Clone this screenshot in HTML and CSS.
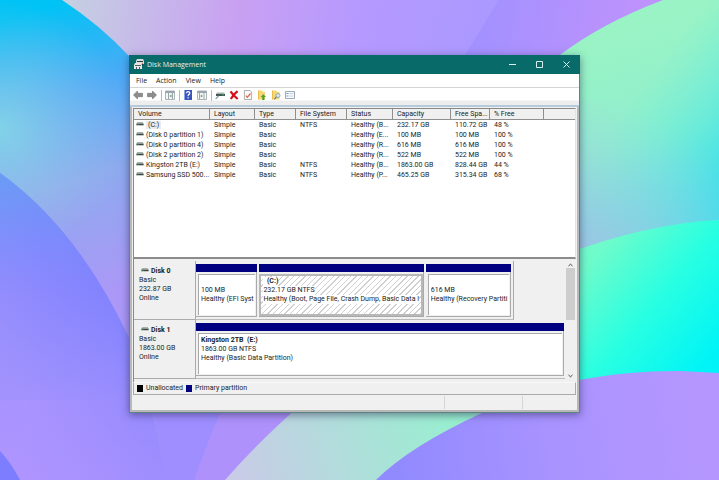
FILE: index.html
```
<!DOCTYPE html>
<html lang="en">
<head>
<meta charset="utf-8">
<title>Disk Management</title>
<link rel="stylesheet" href="styles.css">
</head>
<body>
<svg class="wallpaper" viewBox="0 0 719 480" preserveAspectRatio="none" aria-hidden="true">
  <defs>
    <linearGradient id="top" gradientUnits="userSpaceOnUse" x1="70" y1="0" x2="480" y2="60"><stop offset="0" stop-color="#c5cfe2"/><stop offset=".4" stop-color="#c9a1f2"/><stop offset=".7" stop-color="#b599ff"/><stop offset="1" stop-color="#ab99ff"/></linearGradient>
    <linearGradient id="fold" gradientUnits="userSpaceOnUse" x1="480" y1="0" x2="630" y2="30"><stop offset="0" stop-color="#a291ff"/><stop offset="1" stop-color="#bd92fc"/></linearGradient>
    <linearGradient id="left" gradientUnits="userSpaceOnUse" x1="35" y1="10" x2="115" y2="290"><stop offset="0" stop-color="#00c3f5"/><stop offset=".3" stop-color="#4eaaf6"/><stop offset=".6" stop-color="#8da9ee"/><stop offset="1" stop-color="#ab98f7"/></linearGradient>
    <radialGradient id="leftlight" gradientUnits="userSpaceOnUse" cx="0" cy="130" r="130"><stop offset="0" stop-color="#8ee0e4" stop-opacity=".75"/><stop offset="1" stop-color="#a5c8e8" stop-opacity="0"/></radialGradient>
    <linearGradient id="lower" gradientUnits="userSpaceOnUse" x1="110" y1="260" x2="-10" y2="350"><stop offset="0" stop-color="#7b7dff"/><stop offset="1" stop-color="#a896fb"/></linearGradient>
    <linearGradient id="lowfade" gradientUnits="userSpaceOnUse" x1="0" y1="175" x2="40" y2="480"><stop offset="0" stop-color="#699cf5"/><stop offset=".4" stop-color="#8388ff" stop-opacity=".3"/><stop offset="1" stop-color="#b294ff" stop-opacity=".75"/></linearGradient>
    <linearGradient id="mint" gradientUnits="userSpaceOnUse" x1="610" y1="40" x2="680" y2="250"><stop offset="0" stop-color="#99f3c5"/><stop offset=".5" stop-color="#8feece"/><stop offset="1" stop-color="#7cd1e8"/></linearGradient>
    <linearGradient id="mintfade" gradientUnits="userSpaceOnUse" x1="630" y1="100" x2="745" y2="190"><stop offset="0" stop-color="#60f0dd" stop-opacity="0"/><stop offset="1" stop-color="#24dff0"/></linearGradient>
    <linearGradient id="mintgrey" gradientUnits="userSpaceOnUse" x1="660" y1="120" x2="585" y2="255"><stop offset="0" stop-color="#9dd8df" stop-opacity="0"/><stop offset="1" stop-color="#9cc4e4"/></linearGradient>
    <linearGradient id="aqua" gradientUnits="userSpaceOnUse" x1="585" y1="265" x2="705" y2="365"><stop offset="0" stop-color="#70fbca"/><stop offset=".5" stop-color="#28ffe2"/><stop offset="1" stop-color="#00f4f7"/></linearGradient>
    <linearGradient id="ribbon" gradientUnits="userSpaceOnUse" x1="235" y1="480" x2="450" y2="410"><stop offset="0" stop-color="#c9cbe7"/><stop offset="1" stop-color="#98efcf"/></linearGradient>
    <linearGradient id="violet" gradientUnits="userSpaceOnUse" x1="400" y1="480" x2="700" y2="430"><stop offset="0" stop-color="#918aff"/><stop offset=".5" stop-color="#a893ff"/><stop offset="1" stop-color="#b596ff"/></linearGradient>
    <linearGradient id="bottom" gradientUnits="userSpaceOnUse" x1="20" y1="440" x2="160" y2="460"><stop offset="0" stop-color="#b095ff"/><stop offset="1" stop-color="#9089ff"/></linearGradient>
  </defs>
  <path fill="url(#top)" d="M0 0H719V480H0Z"/>
  <path fill="url(#fold)" d="M499 0Q474 40 450 80H719V0Z"/>
  <path fill="url(#left)" d="M62 0Q100 25 129 56L260 230V480H0V0Z"/>
  <path fill="url(#leftlight)" d="M0 0H62Q100 25 129 56V300H0Z"/>
  <path fill="url(#lower)" d="M0 173Q78 229 129 338Q151 400 166 480H0Z"/>
  <path fill="url(#lowfade)" d="M0 173Q78 229 129 338Q151 400 166 480H0Z"/>
  <path fill="url(#bottom)" opacity=".5" d="M0 400H156L166 480H0Z"/>
  <path fill="#7d7eff" d="M0 451Q12 464 20 480H0Z"/>
  <path fill="#9e8eff" d="M150 390H230L195 480H166Q160 430 150 390Z"/>
  <path fill="#ae91fb" d="M226 400H310L235 480H194Q207 442 226 400Z"/>
  <path fill="url(#mint)" d="M719 0H663Q602 23 560 55V270H719Z"/>
  <path fill="url(#mintfade)" d="M719 0H663Q602 23 560 55V270H719Z"/>
  <path fill="url(#mintgrey)" d="M560 100H719V270H560Z"/>
  <path fill="url(#aqua)" d="M719 220Q648 223 560 256V420H719Z"/>
  <path fill="url(#ribbon)" d="M225 480Q258 442 306 400H510L370 490Z"/>
  <path fill="url(#violet)" d="M376 480Q410 446 484 412Q570 370 680 371L719 373V480Z"/>
</svg>
<svg class="sprites" aria-hidden="true">
  <symbol id="drive" viewBox="0 0 9 5"><path fill="#a9b1ae" d="M1 0H8L9 2H0Z"/><path fill="#3d4543" d="M0 2H9V4H0Z"/><path fill="#46a66c" d="M1 2H3V3H1Z"/><path fill="#c2c6c5" d="M0 4H9V5H0Z"/></symbol>
</svg>
<main class="window">
  <header class="titlebar">
    <svg class="app-icon" viewBox="0 0 10 11"><path fill="#d8dddc" d="M3 0H9L10 2V5H2V2Z"/><path fill="#28383a" d="M3 2H9V3H3ZM2 5H9V6H2Z"/><path fill="#e6e8e8" d="M1 4H7L8 6V10H0V6Z"/><path fill="#555f60" d="M1 6H7V7H1ZM2 8H3V10H2ZM5 8H6V10H5Z"/><path fill="#d46b58" d="M8 4H9V5H8Z"/></svg>
    <h1>Disk Management</h1>
    <button type="button" aria-label="Minimize"><svg viewBox="0 0 7 7"><path d="M0 3.5H7"/></svg></button>
    <button type="button" aria-label="Maximize"><svg viewBox="0 0 7 7"><path d="M.5 .5H6.5V6.5H.5Z"/></svg></button>
    <button type="button" aria-label="Close"><svg viewBox="0 0 7 7"><path d="M.5 .5L6.5 6.5M6.5 .5L.5 6.5"/></svg></button>
  </header>
  <nav class="menu">
    <button type="button">File</button><button type="button">Action</button><button type="button">View</button><button type="button">Help</button>
  </nav>
  <div class="toolbar">
    <button type="button" aria-label="Back"><svg viewBox="0 0 10 10"><path fill="#8d8d8d" stroke="#6e6e6e" stroke-width=".6" d="M.5 5L4.5 1V3.3H9.5V6.7H4.5V9Z"/></svg></button>
    <button type="button" aria-label="Forward"><svg viewBox="0 0 10 10"><path fill="#8d8d8d" stroke="#6e6e6e" stroke-width=".6" d="M9.5 5L5.5 1V3.3H.5V6.7H5.5V9Z"/></svg></button>
    <span class="divider"></span>
    <button type="button" aria-label="Show console tree"><svg viewBox="0 0 10 10"><path fill="#f5f6f6" stroke="#9aa1a6" stroke-width=".8" d="M.5 1H9.5V9.5H.5Z"/><path fill="#9aa5ad" d="M.5 1H9.5V3H.5ZM3 3H4V9H3ZM7 3H8V9H7Z"/><path fill="#58a15c" d="M6.5 4.5V7.5L4.5 6Z"/></svg></button>
    <span class="divider"></span>
    <button type="button" aria-label="Help topics"><svg viewBox="0 0 10 10"><path fill="#3854bd" d="M1 0H9V10H1Z"/><path fill="#8da5e8" d="M1 0H2V10H1Z"/><path fill="none" stroke="#fff" stroke-width="1.2" d="M3.5 3.2Q3.6 1.7 5.1 1.7Q6.8 1.7 6.8 3.1Q6.8 4 5.7 4.6Q5.1 5 5.1 6.2M5.1 7.2V8.5"/></svg></button>
    <button type="button" aria-label="Show action pane"><svg viewBox="0 0 10 10"><path fill="#f5f6f6" stroke="#9aa1a6" stroke-width=".8" d="M.5 1H9.5V9.5H.5Z"/><path fill="#9aa5ad" d="M.5 1H9.5V3H.5ZM2 3H3V9H2ZM6.5 3H7.5V9H6.5Z"/><path fill="#58a15c" d="M3.8 4.5V7.5L5.8 6Z"/></svg></button>
    <span class="divider"></span>
    <button type="button" aria-label="Rescan disks"><svg viewBox="0 0 10 10"><path fill="#a4b5b2" d="M2 2.5H9L10 4H1Z"/><path fill="#455755" d="M1 4H10V6H1Z"/><path fill="#48a65e" d="M7 4.3H9V5.3H7Z"/><path stroke="#7799a5" stroke-width="1.2" d="M.7 8.8L3.5 6"/></svg></button>
    <button type="button" aria-label="Delete"><svg viewBox="0 0 10 10"><path fill="none" stroke="#d4101a" stroke-width="2.2" d="M1.5 1.3Q4 5 8.7 9M8.5 1.2Q5 4 1.8 9"/></svg></button>
    <button type="button" aria-label="Properties"><svg viewBox="0 0 10 10"><path fill="#fafafa" stroke="#9a9a9a" stroke-width=".8" d="M1.4 .5H7L8.6 2V9.5H1.4Z"/><path fill="none" stroke="#e16248" stroke-width="1.2" d="M3 5.6L4.3 7.3L7.5 3.5"/></svg></button>
    <button type="button" aria-label="Up one level"><svg viewBox="0 0 10 10"><path fill="#f5d777" d="M1 .5H5L6 1.7H8V9.5H1Z"/><path fill="#e9bd4e" d="M1 .5H2V9.5H1Z"/><path fill="#4aa62b" d="M6.3 4.3L9 7H7.4V10H5.2V7H3.7Z"/></svg></button>
    <button type="button" aria-label="Find"><svg viewBox="0 0 10 10"><path fill="#f5d777" d="M1 .5H5L6 1.7H8.5V9.5H1Z"/><path fill="#e9bd4e" d="M1 .5H2V9.5H1Z"/><circle cx="7" cy="5.5" r="2" fill="#d8eaf2" stroke="#7f9aa5" stroke-width=".8"/><path stroke="#718087" stroke-width="1.2" d="M5.4 7L3.2 9.3"/></svg></button>
    <button type="button" aria-label="View options"><svg viewBox="0 0 10 10"><path fill="#fafcff" stroke="#8296a5" stroke-width=".8" d="M.5 1.5H9.5V8.5H.5Z"/><path stroke="#6799ca" d="M1.5 3.5H3.5M1.5 6H3.5"/><path stroke="#afbac1" stroke-width=".7" d="M4.5 3.5H8.5M4.5 6H8.5"/></svg></button>
  </div>
  <div class="content">
    <section class="volumes">
      <table>
        <colgroup><col class="c-volume"><col class="c-layout"><col class="c-type"><col class="c-fs"><col class="c-status"><col class="c-capacity"><col class="c-free"><col class="c-percent"><col></colgroup>
        <thead><tr><th>Volume</th><th>Layout</th><th>Type</th><th>File System</th><th>Status</th><th>Capacity</th><th>Free Spa...</th><th>% Free</th><th></th></tr></thead>
        <tbody>
          <tr><td><svg class="drive"><use href="#drive"/></svg><span class="selected">(C:)</span></td><td>Simple</td><td>Basic</td><td>NTFS</td><td>Healthy (B...</td><td>232.17 GB</td><td>110.72 GB</td><td>48 %</td><td></td></tr>
          <tr><td><svg class="drive"><use href="#drive"/></svg>(Disk 0 partition 1)</td><td>Simple</td><td>Basic</td><td></td><td>Healthy (E...</td><td>100 MB</td><td>100 MB</td><td>100 %</td><td></td></tr>
          <tr><td><svg class="drive"><use href="#drive"/></svg>(Disk 0 partition 4)</td><td>Simple</td><td>Basic</td><td></td><td>Healthy (R...</td><td>616 MB</td><td>616 MB</td><td>100 %</td><td></td></tr>
          <tr><td><svg class="drive"><use href="#drive"/></svg>(Disk 2 partition 2)</td><td>Simple</td><td>Basic</td><td></td><td>Healthy (R...</td><td>522 MB</td><td>522 MB</td><td>100 %</td><td></td></tr>
          <tr><td><svg class="drive"><use href="#drive"/></svg>Kingston 2TB (E:)</td><td>Simple</td><td>Basic</td><td>NTFS</td><td>Healthy (B...</td><td>1863.00 GB</td><td>828.44 GB</td><td>44 %</td><td></td></tr>
          <tr><td><svg class="drive"><use href="#drive"/></svg>Samsung SSD 500...</td><td>Simple</td><td>Basic</td><td>NTFS</td><td>Healthy (P...</td><td>465.25 GB</td><td>315.34 GB</td><td>68 %</td><td></td></tr>
        </tbody>
      </table>
    </section>
    <section class="disks">
      <div class="disk-list">
        <article class="disk">
          <div class="disk-info"><h2><svg class="drive"><use href="#drive"/></svg>Disk 0</h2><p>Basic</p><p>232.87 GB</p><p>Online</p></div>
          <div class="partitions system">
            <div class="partition efi"><div class="partition-body"><b></b><p>100 MB</p><p>Healthy (EFI Syst</p></div></div>
            <div class="partition boot"><div class="partition-body hatched"><b>&nbsp; (C:)</b><p>232.17 GB NTFS</p><p>Healthy (Boot, Page File, Crash Dump, Basic Data I</p></div></div>
            <div class="partition recovery"><div class="partition-body"><b></b><p>616 MB</p><p>Healthy (Recovery Partiti</p></div></div>
          </div>
        </article>
        <article class="disk">
          <div class="disk-info"><h2><svg class="drive"><use href="#drive"/></svg>Disk 1</h2><p>Basic</p><p>1863.00 GB</p><p>Online</p></div>
          <div class="partitions">
            <div class="partition whole"><div class="partition-body"><b>Kingston 2TB&nbsp; (E:)</b><p>1863.00 GB NTFS</p><p>Healthy (Basic Data Partition)</p></div></div>
          </div>
        </article>
      </div>
      <div class="scrollbar">
        <button type="button" aria-label="Scroll up"><svg viewBox="0 0 5 3"><path d="M.5 2.5L2.5 .7L4.5 2.5"/></svg></button>
        <span class="thumb"></span>
        <button type="button" aria-label="Scroll down"><svg viewBox="0 0 5 3"><path d="M.5 .5L2.5 2.3L4.5 .5"/></svg></button>
      </div>
    </section>
    <div class="legend"><span class="swatch black"></span>Unallocated<span class="swatch navy"></span>Primary partition</div>
  </div>
  <footer class="statusbar"><span></span><span></span><span></span></footer>
</main>
</body>
</html>
```
FILE: styles.css
```
* { box-sizing: border-box; }

body {
  margin: 0;
  min-height: 100vh;
  padding: 55px 139px 67px 129px;
  display: flex;
  background: #a893ff;
  color: #1c1c1c;
  font: 7px/9px Roboto, "Open Sans", sans-serif;
}

h1, h2, p { margin: 0; font-size: inherit; font-weight: 400; }

button {
  padding: 0;
  border: 0;
  background: none;
  color: inherit;
  font: inherit;
}

svg { display: block; }

.wallpaper {
  position: absolute;
  inset: 0;
  z-index: -1;
  width: 100%;
  height: 100%;
}

.sprites { position: absolute; width: 0; height: 0; }

.window {
  flex: 1;
  min-width: 0;
  display: flex;
  flex-direction: column;
  border: 1px solid #5d8481;
  border-top: 0;
  background: #f0f0f0;
  box-shadow: 0 2px 8px rgba(30, 30, 70, .5);
}

.titlebar {
  height: 19px;
  margin: 0 -1px;
  padding-left: 5px;
  display: flex;
  align-items: center;
  background: #086a69;
  color: #e4f1f0;
}

.titlebar h1 { flex: 1; font-family: "Open Sans", sans-serif; }
.app-icon { width: 10px; height: 11px; margin-right: 3px; }

.titlebar button {
  width: 27px;
  height: 19px;
  display: grid;
  place-items: center;
}

.titlebar button svg {
  width: 7px;
  height: 7px;
  fill: none;
  stroke: #d5f0ee;
  stroke-width: 1;
}

.menu {
  height: 14px;
  padding-left: 6px;
  display: flex;
  gap: 9px;
  align-items: center;
  border-bottom: 1px solid #d5d5d5;
  background: #fff;
  font-family: "Open Sans", sans-serif;
}

.toolbar {
  height: 17px;
  padding: 2px 3px 5px;
  display: flex;
  gap: 4px;
  align-items: center;
  background: linear-gradient(#fff 12px, #ededed 13px);
}

.toolbar svg { width: 10px; height: 10px; }
.divider { width: 1px; height: 11px; margin-right: -1px; background: #b8b8b8; }

.content {
  flex: 1;
  display: flex;
  flex-direction: column;
  padding: 1px 3px 0;
  border-top: 2px solid #b5cbdc;
  background: #f0f0f0;
  box-shadow: inset 2px 0 #b8b8b8, inset -2px 0 #b8b8b8;
}

.volumes {
  flex: 1;
  border: 1px solid #888;
  border-right-color: #e3e3e3;
  border-bottom: 2px solid #8c8c8c;
  background: #fff;
}

table { width: 100%; border-collapse: separate; border-spacing: 0; table-layout: fixed; }

.c-volume { width: 76px; }
.c-layout { width: 45px; }
.c-type { width: 41px; }
.c-fs { width: 51px; }
.c-status { width: 46px; }
.c-capacity { width: 58px; }
.c-free { width: 39px; }
.c-percent { width: 54px; }

th, td {
  height: 10px;
  padding: 0 0 0 4px;
  overflow: hidden;
  font-weight: 400;
  text-align: left;
  white-space: nowrap;
}

th {
  height: 11px;
  border-right: 1px solid #8f8f8f;
  border-bottom: 1px solid #8f8f8f;
  background: #f0f0f0;
}

th:last-child { border-right: 0; }
td:first-child { padding-left: 2px; }

.drive {
  display: inline-block;
  width: 8px;
  height: 4px;
  margin-right: 2px;
  vertical-align: 1px;
}

.selected { padding: 0 2px; background: #ebebeb; }

.disks { display: flex; height: 123px; border-left: 1px solid #888; }
.disk-list { flex: 1; min-width: 0; padding-top: 2px; }
.disk { display: flex; height: 59px; }

.disk-info {
  width: 62px;
  padding: 6px 0 0 5px;
  border-right: 1px solid #aaa;
  border-bottom: 1px solid #aaa;
}

.disk-info h2, .partition b { font-weight: 700; }
.disk-info h2 { padding-left: 2px; }

.partitions {
  flex: 1;
  min-width: 0;
  display: flex;
  gap: 2px;
  padding: 3px 1px 2px 0;
  border-bottom: 1px solid #bbb;
}

.partitions.system {
  flex: 0 1 318px;
  padding-right: 2px;
  border-right: 1px solid #aaa;
}

.partition {
  min-width: 0;
  display: flex;
  flex-direction: column;
  border-right: 1px solid #aaa;
  border-bottom: 1px solid #aaa;
}

.partition::before {
  content: "";
  height: 8px;
  margin-right: -1px;
  background: #000080;
}

.efi { flex: 61 1 0; }
.boot { flex: 165 1 0; }
.recovery { flex: 85 1 0; }
.whole { flex: 1; }

.partition-body {
  flex: 1;
  margin: 2px 1px 1px 2px;
  padding: 2px 0 0 2px;
  overflow: hidden;
  border: 1px solid #aaa;
  border-width: 1px 0 0 1px;
  background: #fff;
  white-space: nowrap;
}

.partition-body b { display: block; height: 9px; }
.partition-body p { overflow: hidden; }

.hatched {
  margin: 2px 0 0 0;
  padding: 1px 0 0 2px;
  border: 2px solid #b8b8b8;
  background: repeating-linear-gradient(135deg, #fff 0 3px, #d0d0d0 3px 4px);
}

.hatched b, .hatched p { width: fit-content; background: #fff; }

.scrollbar {
  width: 11px;
  padding: 3px 1px;
  display: flex;
  flex-direction: column;
  align-items: center;
}

.scrollbar svg { width: 5px; height: 4px; fill: none; stroke: #444; }
.scrollbar button { height: 6px; }
.thumb { width: 9px; height: 52px; margin-bottom: auto; background: #cdcdcd; }

.legend {
  height: 13px;
  padding-left: 3px;
  display: flex;
  align-items: center;
  border: 1px solid #aaa;
  border-top-color: #f8f8f8;
}

.swatch { width: 6px; height: 7px; margin-right: 3px; }
.black { background: #000; }
.navy { margin-left: 3px; background: #000080; }

.statusbar {
  height: 17px;
  padding: 1px;
  display: grid;
  grid-template-columns: 314fr 79fr 54fr;
  border: 2px solid #b8b8b8;
  border-top: 0;
}

.statusbar span + span { border-left: 1px solid #d5d5d5; }
```
